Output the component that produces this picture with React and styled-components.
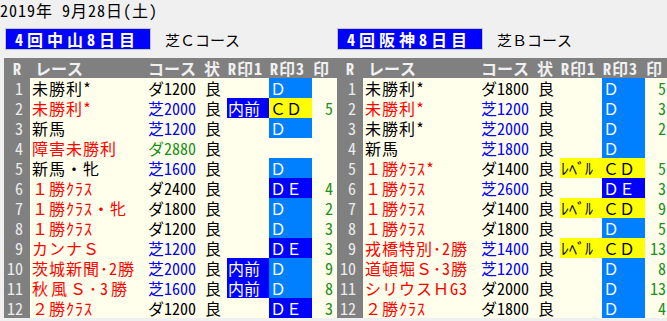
import React from "react";
import styled, { createGlobalStyle } from "styled-components";

const GlobalStyle = createGlobalStyle`
  body {
    margin: 0;
    background: #f0f0f0;
    font-family: "Noto Sans Mono CJK JP", "Noto Sans CJK JP", sans-serif;
    overflow: hidden;
  }
`;

const COLS = "26px 110px 60px 27px 42px 43px 25px";

const Page = styled.div`
  width: 680px;
`;

const DateLine = styled.div`
  height: 22px;
  line-height: 21px;
  font-size: 16px;
  letter-spacing: 1px;
  color: #000;
`;

const Panels = styled.div`
  display: flex;
  padding-left: 4px;
`;

const Panel = styled.section`
  width: 333px;
  flex: none;
`;

const TitleRow = styled.div`
  display: flex;
  align-items: center;
  margin-top: 6px;
  height: 22px;
`;

const MeetBox = styled.div`
  box-sizing: border-box;
  width: 146px;
  height: 22px;
  margin-left: ${(p) => p.offset || 0}px;
  background: #0000ff;
  border: 1px solid #c4c4c4;
  color: #fff;
  font-weight: 700;
  font-size: 16px;
  line-height: 20px;
  letter-spacing: 4px;
  padding-left: 9px;
  white-space: nowrap;
`;

const CourseLabel = styled.div`
  margin-left: 14px;
  font-size: 15px;
  color: #000;
`;

const Table = styled.div`
  margin-top: 8px;
`;

const Row = styled.div`
  display: grid;
  grid-template-columns: ${COLS};
  height: 20px;
  line-height: 20px;
  font-size: 16px;
  background: ${(p) => (p.head ? "#808080" : "#ffffeb")};
  white-space: nowrap;
`;

const HeadCell = styled.div`
  color: #f0f0f0;
  font-weight: 700;
  font-size: 16px;
  letter-spacing: ${(p) => p.ls || 0}px;
  text-align: ${(p) => p.align || "left"};
  padding-left: ${(p) => p.pl || 0}px;
  padding-right: ${(p) => p.pr || 0}px;
`;

const NumCell = styled.div`
  background: #808080;
  color: #ececec;
  text-align: right;
  padding-right: 7px;
`;

const NameCell = styled.div`
  color: ${(p) => (p.red ? "#ff0000" : "#000")};
  padding-left: 2px;
  letter-spacing: ${(p) => (p.wide ? 3 : 1)}px;
`;

const CourseCell = styled.div`
  color: ${(p) => p.color};
  text-align: right;
  padding-right: 4px;
`;

const CondCell = styled.div`
  padding-left: 5px;
  color: #000;
`;

const MARK = {
  light: { bg: "#0080ff", fg: "#fff" },
  dark: { bg: "#0000ff", fg: "#fff" },
  yellow: { bg: "#ffff00", fg: "#000" },
  none: { bg: "transparent", fg: "#000" },
};

const MarkCell = styled.div`
  background: ${(p) => MARK[p.kind].bg};
  color: ${(p) => MARK[p.kind].fg};
  padding-left: 1px;
`;

const ScoreCell = styled.div`
  color: #1a8f1a;
  text-align: right;
  padding-right: 4px;
`;

const COURSE_COLOR = { turf: "#0000ff", dirt: "#000", jump: "#1a8f1a" };

const kindOf = (m) => {
  if (!m) return "none";
  if (m === "ＤＥ" || m === "内前") return "dark";
  if (m === "ＣＤ" || m === "ﾚﾍﾞﾙ") return "yellow";
  return "light";
};

const nakayama = [
  ["未勝利*", 0, "ダ1200", "dirt", "", "Ｄ", ""],
  ["未勝利*", 1, "芝2000", "turf", "内前", "ＣＤ", "5"],
  ["新馬", 0, "芝1200", "turf", "", "Ｄ", ""],
  ["障害未勝利", 1, "ダ2880", "jump", "", "", ""],
  ["新馬・牝", 0, "芝1600", "turf", "", "Ｄ", ""],
  ["１勝ｸﾗｽ", 1, "ダ2400", "dirt", "", "ＤＥ", "4"],
  ["１勝ｸﾗｽ・牝", 1, "ダ1800", "dirt", "", "Ｄ", "2"],
  ["１勝ｸﾗｽ", 1, "ダ1200", "dirt", "", "Ｄ", "3"],
  ["カンナＳ", 1, "芝1200", "turf", "", "ＤＥ", "3"],
  ["茨城新聞･2勝", 1, "芝2000", "turf", "内前", "Ｄ", "9"],
  ["秋風Ｓ･3勝", 1, "芝1600", "turf", "内前", "Ｄ", "8", true],
  ["２勝ｸﾗｽ", 1, "ダ1200", "dirt", "", "ＤＥ", "3"],
];

const hanshin = [
  ["未勝利*", 0, "ダ1800", "dirt", "", "Ｄ", "5"],
  ["未勝利*", 1, "芝1200", "turf", "", "Ｄ", "3"],
  ["未勝利*", 0, "芝2000", "turf", "", "Ｄ", "2"],
  ["新馬", 0, "芝1800", "turf", "", "Ｄ", ""],
  ["１勝ｸﾗｽ*", 1, "ダ1400", "dirt", "ﾚﾍﾞﾙ", "ＣＤ", "5"],
  ["１勝ｸﾗｽ", 1, "芝2600", "turf", "", "ＤＥ", "3"],
  ["１勝ｸﾗｽ", 1, "ダ1400", "dirt", "ﾚﾍﾞﾙ", "ＣＤ", "9"],
  ["１勝ｸﾗｽ", 1, "ダ1800", "dirt", "", "Ｄ", "5"],
  ["戎橋特別･2勝", 1, "芝1400", "turf", "ﾚﾍﾞﾙ", "ＣＤ", "13"],
  ["道頓堀Ｓ･3勝", 1, "芝1200", "turf", "", "Ｄ", "8"],
  ["シリウスＨG3", 1, "ダ2000", "dirt", "", "Ｄ", "13"],
  ["２勝ｸﾗｽ", 1, "ダ1800", "dirt", "", "Ｄ", "4"],
];

const RaceTable = ({ title, course, races, offset }) => (
  <Panel>
    <TitleRow>
      <MeetBox offset={offset}>{title}</MeetBox>
      <CourseLabel>{course}</CourseLabel>
    </TitleRow>
    <Table>
      <Row head>
        <HeadCell align="center">R</HeadCell>
        <HeadCell pl={5}>レース</HeadCell>
        <HeadCell align="right" pr={4}>コース</HeadCell>
        <HeadCell pl={4}>状</HeadCell>
        <HeadCell pl={1} ls={1}>R印1</HeadCell>
        <HeadCell pl={1} ls={1}>R印3</HeadCell>
        <HeadCell pl={1}>印</HeadCell>
      </Row>
      {races.map(([name, red, dist, surface, m1, m3, score, wide], i) => (
        <Row key={i}>
          <NumCell>{i + 1}</NumCell>
          <NameCell red={red} wide={wide}>{name}</NameCell>
          <CourseCell color={COURSE_COLOR[surface]}>{dist}</CourseCell>
          <CondCell>良</CondCell>
          <MarkCell kind={kindOf(m1)}>{m1}</MarkCell>
          <MarkCell kind={kindOf(m3)}>{m3}</MarkCell>
          <ScoreCell>{score}</ScoreCell>
        </Row>
      ))}
    </Table>
  </Panel>
);

export default function App() {
  return (
    <Page>
      <GlobalStyle />
      <DateLine>2019年 9月28日(土)</DateLine>
      <Panels>
        <RaceTable title="4回中山8日目" course="芝Ｃコース" races={nakayama} offset={1} />
        <RaceTable title="4回阪神8日目" course="芝Ｂコース" races={hanshin} />
      </Panels>
    </Page>
  );
}
